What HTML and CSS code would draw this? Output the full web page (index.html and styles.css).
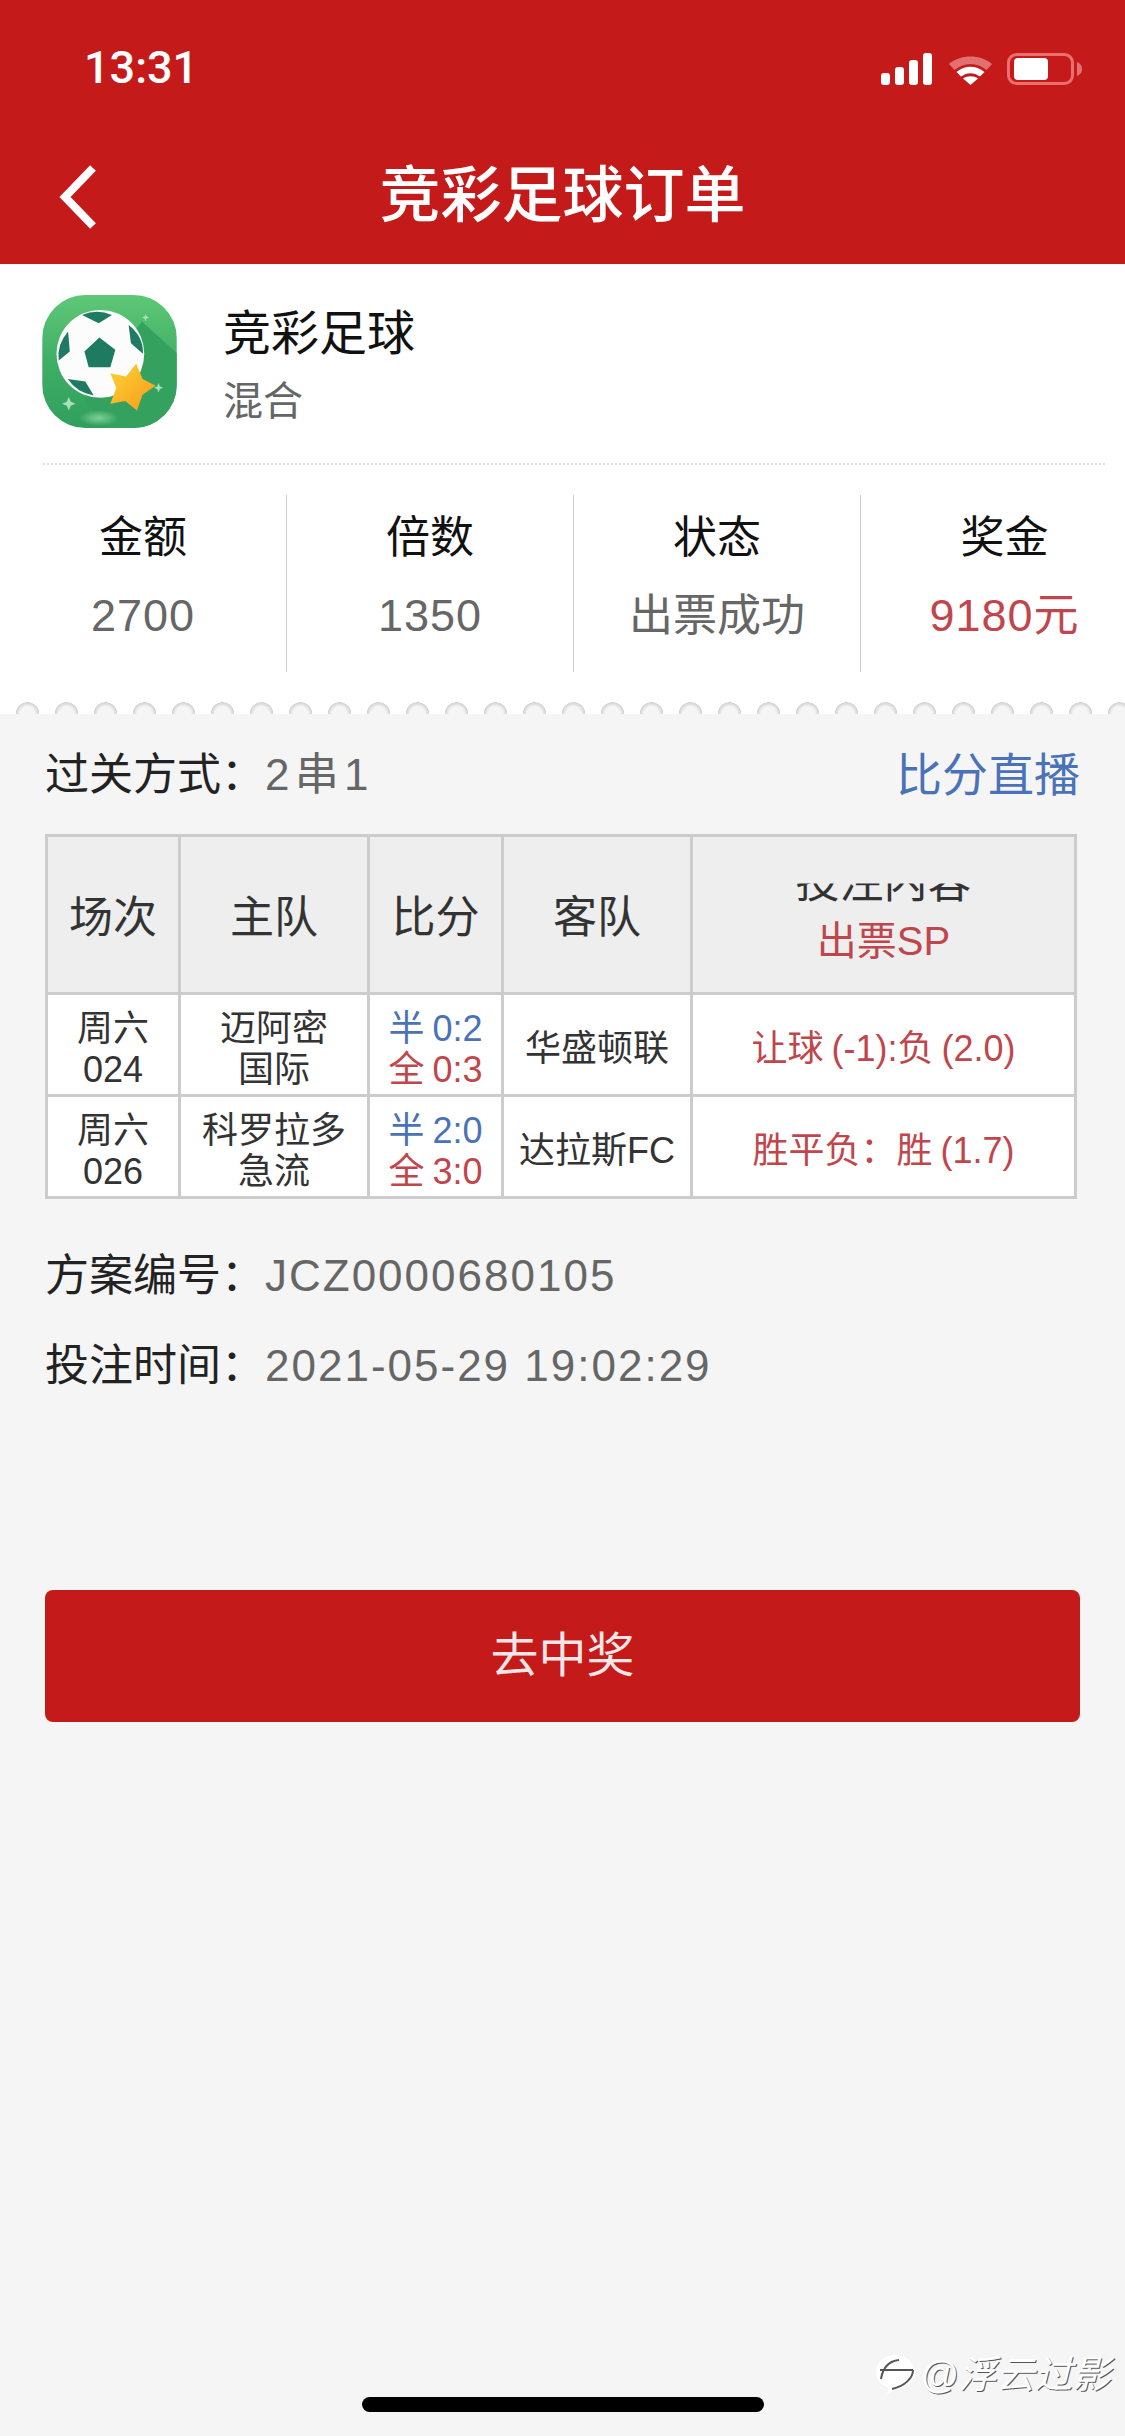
FILE: index.html
```html
<!DOCTYPE html>
<html lang="zh-CN">
<head>
<meta charset="utf-8">
<title>竞彩足球订单</title>
<link rel="stylesheet" href="styles.css">
</head>
<body>
<div class="page">
  <header class="header">
    <div class="status">
      <span class="time">13:31</span>
      <div class="status-icons">
        <svg class="signal" width="51" height="32" viewBox="0 0 51 32"><rect x="0" y="20" width="9" height="12" rx="3"/><rect x="14" y="14" width="9" height="18" rx="3"/><rect x="28" y="7" width="9" height="25" rx="3"/><rect x="42" y="0" width="9" height="32" rx="3"/></svg>
        <svg class="wifi" width="47" height="32" viewBox="0 0 47 32"><path class="wifi-far" d="M2 11C13 1 34 1 45 11L39.500 17C30 9 17 9 7.500 17Z"/><path class="wifi-on" d="M9.500 19C18 12 29 12 37.500 19L33 23.500C27 19 20 19 14 23.500Z"/><path class="wifi-on" d="M16 25.500C20 22.500 27 22.500 31 25.500L23.500 32Z"/></svg>
        <svg class="battery" width="76" height="32" viewBox="0 0 76 32"><rect class="batt-frame" x="1.500" y="1.500" width="64" height="29" rx="8"/><rect class="batt-level" x="7" y="5" width="34" height="22" rx="4"/><path class="batt-cap" d="M70 9C74 11 75 13 75 16C75 19 74 21 70 23Z"/></svg>
      </div>
    </div>
    <div class="nav">
      <svg class="back" width="40" height="66" viewBox="0 0 40 66"><path d="M34 4L6 33L34 62"/></svg>
      <h1 class="title">竞彩足球订单</h1>
      <span></span>
    </div>
  </header>

  <section class="card">
    <div class="app">
      <svg class="app-icon" width="135" height="133" viewBox="35 45 405 400">
        <defs>
          <linearGradient id="bg" x1="0" y1="0" x2="0" y2="1"><stop offset="0" stop-color="#5fc877"/><stop offset=".5" stop-color="#3fae66"/><stop offset="1" stop-color="#2f9f5c"/></linearGradient>
          <linearGradient id="star" x1="0" y1="0" x2="1" y2="1"><stop offset="0" stop-color="#ffd335"/><stop offset="1" stop-color="#f59a1c"/></linearGradient>
          <radialGradient id="glow"><stop offset="0" stop-color="#7fd09a"/><stop offset="1" stop-color="#7fd09a" stop-opacity="0"/></radialGradient>
          <clipPath id="rounded"><rect x="35" y="45" width="405" height="400" rx="130"/></clipPath>
        </defs>
        <g clip-path="url(#rounded)">
          <rect x="35" y="45" width="405" height="400" fill="url(#bg)"/>
          <path d="M335 125L440 220V445H240L160 360Z" fill="#34a25e"/>
          <ellipse cx="205" cy="415" rx="60" ry="24" fill="url(#glow)"/>
        </g>
        <circle cx="210" cy="222" r="132" fill="#fbfcfb"/>
        <path d="M207 173L255 210L240 262H175L162 215Z" fill="#1f7a62"/>
        <path d="M155 105Q200 85 245 105L205 130Z" fill="#1f7a62"/>
        <path d="M113 155Q78 195 85 242L118 215Z" fill="#1f7a62"/>
        <path d="M295 135Q340 170 338 222L302 190Z" fill="#1f7a62"/>
        <path d="M112 298L165 305L190 347Q140 340 112 298Z" fill="#1f7a62"/>
        <path d="M318 252L337 298L376 318L337 345L320 392L285 364L240 372L258 325L240 280L287 290Z" fill="url(#star)"/>
        <path d="M115 352l6 14 14 6-14 6-6 14-6-14-14-6 14-6ZM385 310l4 10 10 4-10 4-4 10-4-10-10-4 10-4ZM346 102l3 8 8 3-8 3-3 8-3-8-8-3 8-3Z" fill="#a8e2bb"/>
      </svg>
      <div class="app-text">
        <div class="app-name">竞彩足球</div>
        <div class="app-type">混合</div>
      </div>
    </div>
    <div class="stats">
      <div class="stat"><div class="stat-label">金额</div><div class="stat-value num">2700</div></div>
      <div class="stat"><div class="stat-label">倍数</div><div class="stat-value num">1350</div></div>
      <div class="stat"><div class="stat-label">状态</div><div class="stat-value">出票成功</div></div>
      <div class="stat"><div class="stat-label">奖金</div><div class="stat-value num red">9180元</div></div>
    </div>
    <div class="scallops"></div>
  </section>

  <main class="body">
    <div class="row-between">
      <div class="line"><span class="key">过关方式：</span><span class="val spaced">2 串 1</span></div>
      <a class="live">比分直播</a>
    </div>

    <table class="bets">
      <colgroup><col class="c1"><col class="c2"><col class="c3"><col class="c4"><col class="c5"></colgroup>
      <thead>
        <tr>
          <th>场次</th><th>主队</th><th>比分</th><th>客队</th>
          <th class="th-bet"><span class="clipped">投注内容</span><span class="sp">出票SP</span></th>
        </tr>
      </thead>
      <tbody>
        <tr>
          <td>周六<br>024</td><td>迈阿密<br>国际</td>
          <td class="score"><span class="blue">半 0:2</span><br><span class="red">全 0:3</span></td>
          <td>华盛顿联</td><td class="red bet">让球 (-1):负 (2.0)</td>
        </tr>
        <tr>
          <td>周六<br>026</td><td>科罗拉多<br>急流</td>
          <td class="score"><span class="blue">半 2:0</span><br><span class="red">全 3:0</span></td>
          <td>达拉斯FC</td><td class="red bet">胜平负：胜 (1.7)</td>
        </tr>
      </tbody>
    </table>

    <div class="line info first"><span class="key">方案编号：</span><span class="val">JCZ0000680105</span></div>
    <div class="line info"><span class="key">投注时间：</span><span class="val">2021-05-29 19:02:29</span></div>

    <button class="cta">去中奖</button>
  </main>

  <div class="watermark">
    <svg width="42" height="44" viewBox="0 0 42 44"><path class="wm-bubble" d="M20 2C32 2 40 10 40 20C40 30 30 35 20 36L12 43L14 35C6 32 1 27 1 19C1 9 9 2 20 2Z"/><path class="wm-mark" d="M6 26C8 14 14 8 24 7M5 17H38M38 17C38 25 30 33 17 36"/></svg>
    <span class="wm-text">@浮云过影</span>
  </div>
  <div class="home"></div>
</div>
</body>
</html>
```

FILE: styles.css
```css
* { box-sizing: border-box; }
html, body { margin: 0; padding: 0; }
body {
  width: 1125px;
  height: 2436px;
  overflow: hidden;
  background: #f5f5f5;
  font-family: "Liberation Sans", "Noto Sans CJK SC", sans-serif;
  font-size: 44px;
  line-height: 60px;
  color: #222;
}
.page { position: relative; width: 1125px; height: 2436px; display: flex; flex-direction: column; }

.header { height: 264px; background: #c41a1a; color: #fff; }
.status { height: 136px; display: flex; justify-content: space-between; align-items: center; padding: 0 42px 0 84px; }
.time { font-family: Roboto, "Liberation Sans", sans-serif; font-size: 45px; font-weight: 500; }
.status-icons { display: flex; align-items: center; margin-top: 2px; }
.signal { fill: #fff; margin-right: 15px; }
.wifi { margin-right: 13px; }
.wifi-far { fill: #e2706f; }
.wifi-on { fill: #fff; }
.batt-frame { fill: none; stroke: #e9706f; stroke-width: 3; }
.batt-level { fill: #fff; }
.batt-cap { fill: #e2706f; }

.nav { height: 128px; padding: 0 0 8px; display: grid; grid-template-columns: 1fr auto 1fr; align-items: center; }
.back { margin-left: 59px; margin-top: 2px; }
.back path { fill: none; stroke: #fff; stroke-width: 8; }
.title { margin: 0; font-size: 61px; font-weight: 500; line-height: 70px; }

.card { background: #fff; }
.app { display: flex; margin: 0 20px 0 43px; padding: 31px 0 32px; border-bottom: 2px dotted #dcdcdc; }
.app-icon { flex: none; margin-left: -1px; }
.app-text { margin: 9px 0 0 46px; }
.app-name { font-size: 48px; color: #111; }
.app-type { margin-top: 7px; font-size: 40px; color: #666; }

.stats { display: flex; overflow: hidden; margin-top: 30px; }
.stat { flex: 0 0 287px; height: 177px; padding-top: 13px; text-align: center; border-right: 1px solid #ccc; }
.stat:last-child { border-right: 0; }
.stat-label { color: #111; }
.stat-value { margin-top: 18px; color: #666; font-size: 44px; white-space: nowrap; }
.stat-value.num { font-size: 45px; letter-spacing: 1px; }
.stat-value.red { color: #c0464c; }

.scallops {
  height: 42px;
  background: radial-gradient(circle 12px at 19.500px 12px, #f5f5f5 0, #f5f5f5 62%, #d2d2d2 96%, #fff 100%) 8px 30px / 39px 12px repeat-x;
}

.body { flex: 1; padding: 31px 45px 0; background: #f5f5f5; }
.row-between { display: flex; justify-content: space-between; }
.key { color: #222; }
.val { color: #666; letter-spacing: 2px; }
.val.spaced { word-spacing: -11px; }
.live { color: #4a72b8; font-size: 46px; }

.bets { margin-top: 29px; width: 1029px; table-layout: fixed; border-collapse: collapse; border: 3px solid #ccc; font-size: 36px; line-height: 41px; color: #333; background: #fff; text-align: center; }
.bets th, .bets td { border: 3px solid #ccc; padding: 8px 0 0; white-space: nowrap; }
.bets th { height: 158px; background: #eee; font-size: 44px; font-weight: 400; line-height: 60px; padding-top: 6px; }
.bets td { height: 102px; }
.c1 { width: 133px; } .c2 { width: 189px; } .c3 { width: 134px; } .c4 { width: 189px; } .c5 { width: 384px; }
.bets .th-bet { font-size: 40px; }
.clipped { display: block; margin-top: -14px; font-size: 44px; line-height: 60px; clip-path: inset(31px 0 0 0); }
.sp { display: block; color: #c0464c; line-height: 56px; }
.score, .bet { word-spacing: -2px; }
.red { color: #c0464c; }
.blue { color: #4a72b8; }

.info { margin-top: 30px; }
.info.first { margin-top: 47px; }

.cta { display: block; width: 1035px; height: 132px; margin-top: 194px; border: 0; border-radius: 8px; background: #c41a1a; color: #f7e6e6; font: inherit; font-size: 48px; }

.home { position: absolute; left: 362px; top: 2397px; width: 402px; height: 15px; border-radius: 8px; background: #000; }

.watermark { position: absolute; left: 875px; top: 2352px; display: flex; align-items: center; }
.wm-bubble { fill: #fff; }
.wm-mark { fill: none; stroke: #555; stroke-width: 2; }
.wm-text { margin-left: 3px; font-size: 38px; line-height: 46px; font-style: italic; color: #fff; text-shadow: 1px 1px 0 #555; white-space: nowrap; }
```
